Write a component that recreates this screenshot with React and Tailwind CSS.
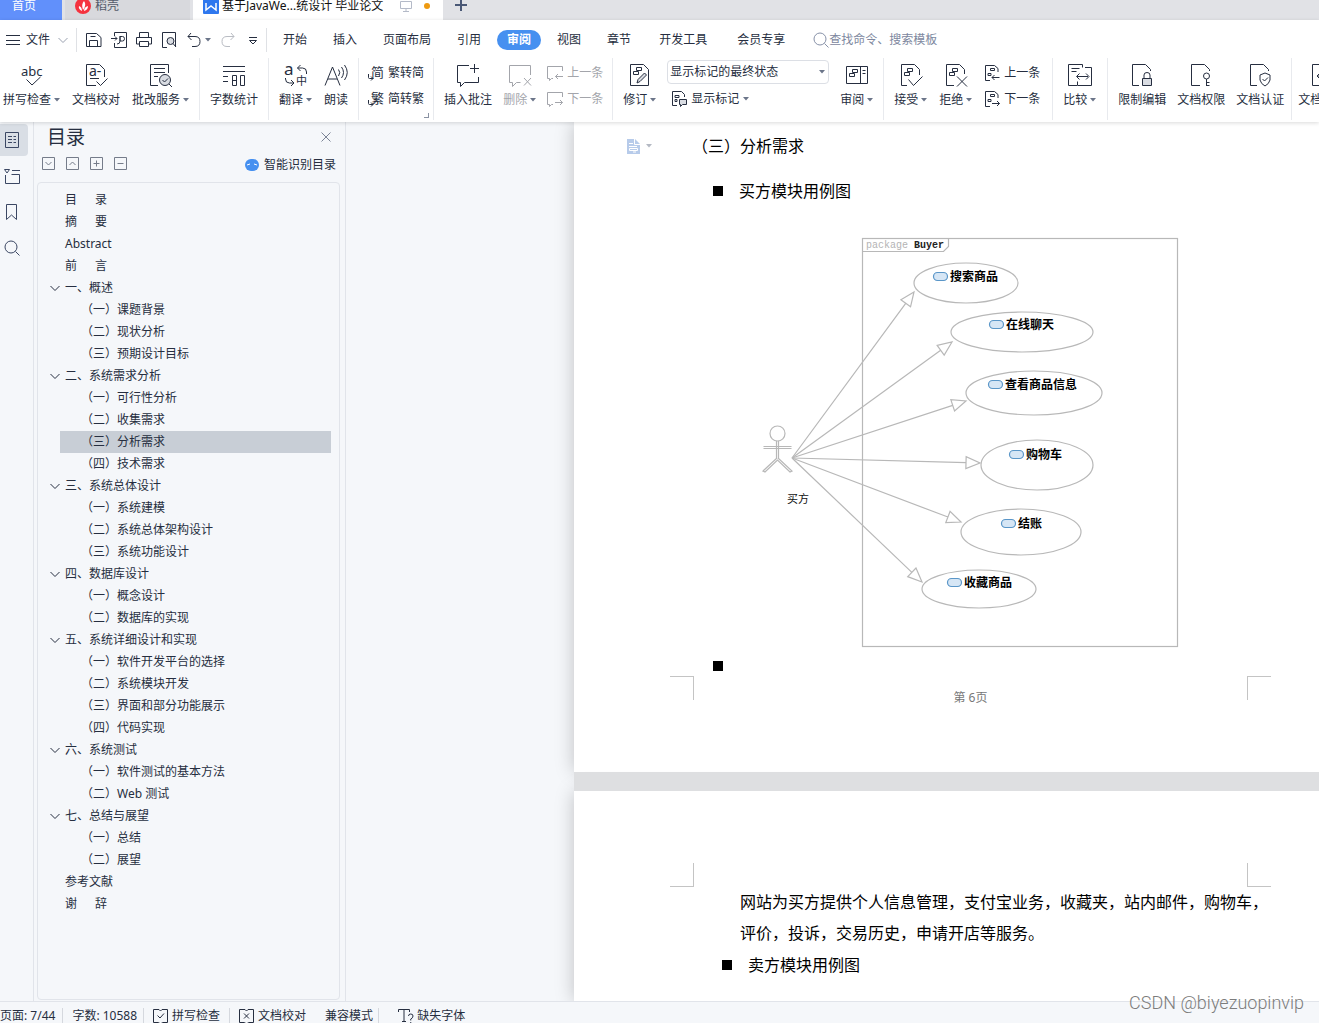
import { Fragment } from 'react'

const glyph = { stroke: 'none', fill: 'currentColor' }

// 24px ribbon icons
const BIG = {
  spell: (
    <>
      <text x="1" y="12" fontSize="13" {...glyph}>abc</text>
      <path d="M6.5 15.5l5.5 5.5 8.5-8" />
    </>
  ),
  proof: (
    <>
      <path d="M12 21.5H2.5V.5h13l5 5V13M6 14.500h9" />
      <text x="5" y="12" fontSize="14" {...glyph}>a-</text>
      <path d="M12.5 17.5l4 4 7-7" />
    </>
  ),
  correct: (
    <>
      <path d="M9 21.5H1.500V.5h18V9M5 4.500h11M5 8.500h11M5 12.500h4" />
      <circle cx="16" cy="16" r="5.500" fill="#d9dce2" />
      <path d="M13.500 16l2 2 3.500-3.500M20 20l3 3" />
    </>
  ),
  count: (
    <path d="M1 2.500h22M1 7.500h22M1 12.500h5M1 17.500h5M10.500 11.500h4v10h-4zM10.500 16.500h4M18.500 11.500h4v10h-4z" />
  ),
  translate: (
    <>
      <text x="0" y="11" fontSize="17" {...glyph}>a</text>
      <text x="12" y="21" fontSize="11" {...glyph}>中</text>
      <path d="M22.500 10V8q0-4-4-4h-5M16.500 1l-3 3 3 3M1.500 14v1q0 4 4 4h4M7 16l3 3-3 3" />
    </>
  ),
  read: (
    <path d="M1 21.500L8.500 3l7.500 18.500M4 15h9M14.500 5.500q2.500 3 0 6.500M17.500 3q4 5.500 0 11M20.500 1q5.500 7.500 0 15" />
  ),
  comment: <path d="M13 1.500H1.500v17h3v4l4-4h14V13M18.500 0v9M14 4.500h9" />,
  commentDel: <path d="M22.500 11V1.500H1.500v17h3v4l4-4h4M16 14l7 7.500M23 14l-7 7.500" />,
  revise: (
    <>
      <path d="M2.500 21.500V.5h13l5 5v16zM5.500 7.500h5v3h-5zM8.500 3.500h5v3h-5z" />
      <path d="M9 19l1-3.500 6.500-6.500 2 2-6.500 6.500z" fill="#d9dce2" />
    </>
  ),
  pane: (
    <path d="M1.500 2.500h21v17h-21zM15.500 2.500v17M17.500 6.500h3M17.500 9.500h3M4.500 9.500h5v3h-5zM7.500 5.500h5v3h-5z" />
  ),
  accept: (
    <path d="M8 21.500H2.500V.5h13l5 5V11M5.500 8.500h5v3h-5zM8.500 4.500h5v3h-5zM9.500 15.500l5 6 9-9" />
  ),
  reject: (
    <path d="M10 21.500H2.500V.5h13l5 5V10M5.500 8.500h5v3h-5zM8.500 4.500h5v3h-5zM13 12.500l10 10M23 12.500l-10 10" />
  ),
  compare: (
    <path d="M9 21.500H.5V.5h14v3M3.500 4.500h8M3.500 7.500h5M17 3.500h6.500v18h-14v-4M9 12.500h11M11.500 9.500l-3 3 3 3M18 9.500l3 3-3 3" />
  ),
  lock: (
    <>
      <path d="M9 21.500H2.500V.5h13l5 5V7M14 14v-3q0-2.500 3-2.500t3 2.500v3" />
      <path d="M12.500 14.500h9v7h-9z" fill="#d9dce2" />
    </>
  ),
  key: (
    <>
      <path d="M11 21.500H2.500V.5h13l5 5V7M17.500 15v7M17.500 18.500h3M17.500 21.500h3" />
      <circle cx="17.500" cy="12" r="3" />
    </>
  ),
  shield: (
    <path d="M9 21.500H2.500V.5h13l5 5V7M17 9l5 2v5q-1 4-5 6-4-2-5-6v-5zM14.500 15l2 2 3.500-3.500" />
  ),
  back: <path d="M24 21.500H2.500V.5h13l5 5M7 12h10M10 9l-3 3 3 3" />,
}

// 16px icons
const SMALL = {
  save: <path d="M.5 14.500V1.500h10l4.500 4v9zM3.500 14v-5.500h8V14M4.500 4.500h5" />,
  pdf: (
    <path d="M3.500 4V.5h12v15h-12V11M0 6.500h6M4 4.500l2 2-2 2M9 4.500h2.500q2 0 2 2.250t-2 2.250H9zM9 4v5q0 3-3 3" />
  ),
  print: <path d="M3.500 5V.5h9V5M3.500 12H.5V5.500h15V12h-3M3.500 9.500h9v5h-9z" />,
  preview: (
    <>
      <path d="M6 15.500H1.500V.5h13V15" />
      <circle cx="9.500" cy="9" r="3.500" fill="#d9dce2" />
      <path d="M12 11.500l3 3.500" />
    </>
  ),
  undo: <path d="M5 1L2 4.500 5.500 8M2 4.500h7q5 0 5 5t-5 5H6" />,
  redo: <path d="M11 1l3 3.500L10.500 8M14 4.500H7q-5 0-5 5t5 5h3" />,
  more: <path d="M4 5.500h8M4.500 8.500L8 12l3.500-3.500z" />,
  menu: <path d="M1 3.500h14M1 8.500h14M1 12.500h14" />,
  chevron: <path d="M3.500 6L8 10.500 12.500 6" />,
  search: (
    <>
      <circle cx="7" cy="7" r="6" />
      <path d="M11.500 11.500l4 4" />
    </>
  ),
  toSimp: (
    <>
      <text x="3" y="12" fontSize="13" {...glyph}>简</text>
      <path d="M.5 9v3.500q0 1 1 1H5M3 11.500l2 2-2 2" />
    </>
  ),
  toTrad: (
    <>
      <text x="3" y="12" fontSize="13" {...glyph}>繁</text>
      <path d="M.5 9v3.500q0 1 1 1H5M3 11.500l2 2-2 2" />
    </>
  ),
  notePrev: <path d="M15.500 6V1.500H.5v12h2v2l2-2H6M16 11.500H8.500M11 9l-2.500 2.500L11 14" />,
  noteNext: <path d="M15.500 6V1.500H.5v12h2v2l2-2H6M8 11.500h7.500M13 9l2.500 2.500L13 14" />,
  marks: (
    <>
      <path d="M6 14.500H1.500V.5h9l3 3V6M4 4.500h4v2H4zM4 8.500h2v2H4z" />
      <path d="M8.500 8.500h7v5h-4l-2 2v-2h-1z" fill="#d9dce2" />
    </>
  ),
  docPrev: (
    <path d="M6 15.500H1.500V.5h9l3.500 3V7M6.500 3.500h4v2h-4zM4 8.500h3v2H4zM15.500 12.500H8M10.500 10L8 12.500l2.500 2.500" />
  ),
  docNext: (
    <path d="M6 15.500H1.500V.5h9l3.500 3V7M6.500 3.500h4v2h-4zM4 8.500h3v2H4zM8 12.500h7.500M13 10l2.500 2.500L13 15" />
  ),
  outline: <path d="M1.500.5h13v15h-13zM4 4.500h4M9.500 4.500H12M4 7.500h4M9.500 7.500H12M4 10.500h4M9.500 10.500H12" />,
  chapters: <path d="M.5 1.500h5L3 5zM8 2.500h8M1.500 7v8.500h14v-9h-8" />,
  bookmark: <path d="M3.500.5h10v15l-5-4.500-5 4.500z" />,
  down: <path d="M1.500 1.500h12v12h-12zM4.500 6l3 3 3-3" />,
  up: <path d="M1.500 1.500h12v12h-12zM4.500 9l3-3 3 3" />,
  plus: <path d="M1.500 1.500h12v12h-12zM4.500 7.500h6M7.500 4.500v6" />,
  minus: <path d="M1.500 1.500h12v12h-12zM4.500 7.500h6" />,
  close: <path d="M3.500 3.500l9 9M12.500 3.500l-9 9" />,
  bookCheck: <path d="M6 1.500H.5v13h5l2 1.500 2-1.500h5v-13H9L7.500 3 6 1.500M4.500 7.500l2.500 2.500 4-4.500" />,
  bookCross: <path d="M6 1.500H.5v13h5l2 1.500 2-1.500h5v-13H9L7.500 3 6 1.500M5 5.500l5 5M10 5.500l-5 5" />,
  font: <path d="M.5 4V1.500h11V4M6 1.500v12M4 13.500h4M10.500 8q0-2 2.250-2t2.250 2-2.250 3v1.500M12.750 14v1" />,
}

function Icon({ name, className = '' }) {
  const big = name in BIG
  return (
    <svg
      viewBox={big ? '0 0 24 24' : '0 0 16 16'}
      className={`shrink-0 overflow-visible ${big ? 'size-6' : 'size-4'} ${className}`}
      fill="none"
      stroke="currentColor"
      aria-hidden="true"
    >
      {big ? BIG[name] : SMALL[name]}
    </svg>
  )
}

function Caret() {
  return (
    <svg viewBox="0 0 6 4" className="w-1.5 h-1 shrink-0 text-[#6b7589]" fill="currentColor" aria-hidden="true">
      <path d="M0 0h6L3 3.500z" />
    </svg>
  )
}

function Tool({ icon, label, caret, disabled }) {
  return (
    <button
      disabled={disabled}
      className={`flex flex-col items-center gap-1 shrink-0 whitespace-nowrap ${disabled ? 'text-[#a3a5ab]' : ''}`}
    >
      <Icon name={icon} />
      <span className="flex items-center gap-[3px] leading-4">
        {label}
        {caret && <Caret />}
      </span>
    </button>
  )
}

function MiniTool({ icon, label, caret, disabled }) {
  return (
    <button
      disabled={disabled}
      className={`flex items-center gap-1 leading-4 whitespace-nowrap ${disabled ? 'text-[#a3a5ab]' : ''}`}
    >
      <Icon name={icon} />
      {label}
      {caret && <Caret />}
    </button>
  )
}

function Group({ children, className = 'gap-3 px-2.5' }) {
  return (
    <div className={`flex shrink-0 pt-1.5 h-[62px] border-r border-[#e8eaee] ${className}`}>
      {children}
    </div>
  )
}

function Stack({ children }) {
  return <div className="flex flex-col gap-2.5 shrink-0 pt-px">{children}</div>
}

const MENU = ['开始', '插入', '页面布局', '引用', '审阅', '视图', '章节', '开发工具', '会员专享']

function menuClass(item) {
  if (item === '审阅') return 'h-5 px-2.5 mx-[3px] rounded-full bg-[#4690f0] text-white font-bold'
  if (item === '开发工具' || item === '会员专享') return 'h-5 px-[15px]'
  return 'h-5 px-[13px]'
}

const OUTLINE = [
  [0, '目', '录'],
  [0, '摘', '要'],
  [0, 'Abstract'],
  [0, '前', '言'],
  [1, '一、概述'],
  [2, '（一）课题背景'],
  [2, '（二）现状分析'],
  [2, '（三）预期设计目标'],
  [1, '二、系统需求分析'],
  [2, '（一）可行性分析'],
  [2, '（二）收集需求'],
  [2, '（三）分析需求'],
  [2, '（四）技术需求'],
  [1, '三、系统总体设计'],
  [2, '（一）系统建模'],
  [2, '（二）系统总体架构设计'],
  [2, '（三）系统功能设计'],
  [1, '四、数据库设计'],
  [2, '（一）概念设计'],
  [2, '（二）数据库的实现'],
  [1, '五、系统详细设计和实现'],
  [2, '（一）软件开发平台的选择'],
  [2, '（二）系统模块开发'],
  [2, '（三）界面和部分功能展示'],
  [2, '（四）代码实现'],
  [1, '六、系统测试'],
  [2, '（一）软件测试的基本方法'],
  [2, '（二）Web 测试'],
  [1, '七、总结与展望'],
  [2, '（一）总结'],
  [2, '（二）展望'],
  [0, '参考文献'],
  [0, '谢', '辞'],
]

// ellipse centre and radii, label origin, arrow tip
const CASES = [
  { name: '搜索商品', cx: 226, cy: 53, rx: 52, ry: 20, x: 210, y: 51, tip: [174, 62] },
  { name: '在线聊天', cx: 282, cy: 102, rx: 71, ry: 20, x: 266, y: 99, tip: [212, 112] },
  { name: '查看商品信息', cx: 294, cy: 163, rx: 68, ry: 22, x: 265, y: 159, tip: [226, 171] },
  { name: '购物车', cx: 297, cy: 235, rx: 56, ry: 25, x: 286, y: 229, tip: [240, 233] },
  { name: '结账', cx: 281, cy: 302, rx: 60, ry: 23, x: 278, y: 298, tip: [221, 292] },
  { name: '收藏商品', cx: 239, cy: 359, rx: 57, ry: 19, x: 224, y: 357, tip: [182, 352] },
]

function Arrow({ tip: [tx, ty] }) {
  const [sx, sy] = [52, 228]
  const angle = (Math.atan2(ty - sy, tx - sx) * 180) / Math.PI
  const length = Math.hypot(tx - sx, ty - sy)
  return (
    <g transform={`translate(${sx} ${sy}) rotate(${angle})`}>
      <path d={`M0 0H${length - 14}M${length - 14} -6V6L${length} 0z`} />
    </g>
  )
}

function UseCaseDiagram() {
  return (
    <svg
      viewBox="0 0 450 420"
      className="w-[450px] h-[420px] shrink-0"
      fill="none"
      stroke="#b8b8b8"
      strokeWidth="1.2"
      role="img"
      aria-label="买方模块用例图"
    >
      <rect x="122.500" y="8.500" width="315" height="408" />
      <path d="M122.500 21.500h81l5-5v-8" />
      <text x="126" y="18" fontSize="10" fill="#b4b4b4" stroke="none" fontFamily="Liberation Mono, monospace">
        package
      </text>
      <text x="174" y="18" fontSize="10" fontWeight="bold" fill="#222" stroke="none" fontFamily="Liberation Mono, monospace">
        Buyer
      </text>
      <circle cx="37.500" cy="203.500" r="7.500" />
      <path d="M36.500 211v7M38.500 211v7M23.500 216.500h28M23.500 218.500h28M36.500 218v11M38.500 218v11M37 228l-14 13 2 1 12.500-12 12.500 12 2-1-14-13" />
      <text x="47" y="273" fontSize="11" fill="#111" stroke="none">买方</text>
      {CASES.map(c => (
        <Fragment key={c.name}>
          <Arrow tip={c.tip} />
          <ellipse cx={c.cx} cy={c.cy} rx={c.rx} ry={c.ry} />
          <rect x={c.x - 16.5} y={c.y - 8.500} width="14" height="8" rx="4" fill="#d6e6f5" stroke="#5a96c8" />
          <text x={c.x} y={c.y} fontSize="12" fontWeight="bold" fill="#000" stroke="none">{c.name}</text>
        </Fragment>
      ))}
    </svg>
  )
}

function Bullet() {
  return <span className="size-2.5 bg-black shrink-0" />
}

export default function App() {
  return (
    <div className="relative h-screen flex flex-col overflow-hidden bg-[#f5f7fa] text-xs text-[#262e40] font-['Noto_Sans','Noto_Sans_CJK_SC',sans-serif]">
      <nav className="flex h-5 shrink-0 bg-[#e1e2e6] leading-3">
        <button className="flex items-start w-[62px] pl-3 bg-[#6190fb] text-white">首页</button>
        <button className="flex items-start gap-1 w-[125px] ml-[3px] pl-2.5 bg-[#d8d9dd] text-[#555c6b]">
          <svg viewBox="0 2 16 14" className="w-4 h-3.5" aria-hidden="true">
            <circle cx="8" cy="8" r="8" fill="#f5333f" />
            <path d="M7 13q-4-2-3-5 3 1 3 5zM8 12q-2-6 1-9 3 4-1 9zM9 13q0-4 4-5 0 4-4 5z" fill="#fff" />
          </svg>
          稻壳
        </button>
        <button className="flex items-start w-[250px] ml-[3px] pl-2.5 bg-white text-[#111]">
          <svg viewBox="0 2 16 14" className="w-4 h-3.5 mr-[3px] shrink-0" aria-hidden="true">
            <rect width="16" height="16" rx="1" fill="#2e77ee" />
            <path d="M3 5v7l5-4 5 4V5" fill="none" stroke="#fff" strokeWidth="1.500" />
          </svg>
          <span className="whitespace-nowrap">基于JavaWe...统设计 毕业论文</span>
          <svg viewBox="0 0 12 12" className="size-3 ml-[17px] shrink-0" fill="none" stroke="#b4bac8" aria-hidden="true">
            <path d="M.5 1.500h11v7H.5zM6 8.500v3M3 11.500h6" />
          </svg>
          <span className="size-1.5 mt-[3px] ml-3 rounded-full bg-[#ee9a10]" />
        </button>
        <button aria-label="新建" className="flex items-start pl-3 text-[#4a5876]">
          <svg viewBox="0 1 12 12" className="size-3" stroke="currentColor" strokeWidth="2" aria-hidden="true">
            <path d="M6 0v12M0 6h12" />
          </svg>
        </button>
      </nav>

      <header className="relative z-10 shrink-0 h-[102px] bg-white shadow-[0_1px_4px_rgba(0,0,0,0.15)]">
        <div className="flex items-center h-[38px] pt-0.5 whitespace-nowrap">
          <button className="flex items-center gap-[5px] pl-[5px]">
            <Icon name="menu" />
            文件
            <Icon name="chevron" className="text-[#9aa1b0]" />
          </button>
          <div className="flex items-center gap-[9px] h-6 ml-[5px] pl-[9px] pr-[5px] border-x border-[#dfe1e5]">
            <button aria-label="保存"><Icon name="save" /></button>
            <button aria-label="输出为PDF"><Icon name="pdf" /></button>
            <button aria-label="打印"><Icon name="print" /></button>
            <button aria-label="打印预览"><Icon name="preview" /></button>
            <button aria-label="撤销" className="flex items-center gap-[3px]"><Icon name="undo" /><Caret /></button>
            <button aria-label="恢复" className="text-[#b9bcc3]"><Icon name="redo" /></button>
            <button aria-label="更多"><Icon name="more" /></button>
          </div>
          <div className="flex items-center ml-[3px]">
            {MENU.map(item => (
              <button key={item} className={menuClass(item)}>{item}</button>
            ))}
          </div>
          <label className="flex items-center flex-1 ml-[13px] text-[#8791a8]">
            <Icon name="search" />
            <input
              aria-label="查找命令"
              placeholder="查找命令、搜索模板"
              className="w-40 outline-none placeholder:text-[#7d879e]"
            />
          </label>
        </div>

        <div className="flex overflow-hidden">
          <div className="-ml-[7px] flex">
            <Group>
              <Tool icon="spell" label="拼写检查" caret />
              <Tool icon="proof" label="文档校对" />
              <Tool icon="correct" label="批改服务" caret />
            </Group>
            <Group>
              <Tool icon="count" label="字数统计" />
            </Group>
            <Group>
              <Tool icon="translate" label="翻译" caret />
              <Tool icon="read" label="朗读" />
            </Group>
            <Group className="relative px-[9px]">
              <Stack>
                <MiniTool icon="toSimp" label="繁转简" />
                <MiniTool icon="toTrad" label="简转繁" />
              </Stack>
              <span className="absolute right-1 bottom-0.5 size-[5px] border-r border-b border-[#8a92a3]" />
            </Group>
            <Group className="gap-[11px] pl-2.5 pr-[9px]">
              <Tool icon="comment" label="插入批注" />
              <Tool icon="commentDel" label="删除" caret disabled />
              <Stack>
                <MiniTool icon="notePrev" label="上一条" disabled />
                <MiniTool icon="noteNext" label="下一条" disabled />
              </Stack>
            </Group>
            <Group className="gap-[11px] px-2.5">
              <Tool icon="revise" label="修订" caret />
              <div className="flex flex-col gap-[7px] shrink-0 -mt-1">
                <div className="relative flex items-center">
                  <select
                    aria-label="标记状态"
                    className="appearance-none w-[162px] h-6 pl-0.5 border border-[#dcdfe5] rounded-sm bg-white outline-none"
                  >
                    <option>显示标记的最终状态</option>
                  </select>
                  <span className="absolute right-1 flex"><Caret /></span>
                </div>
                <div className="pl-1">
                  <MiniTool icon="marks" label="显示标记" caret />
                </div>
              </div>
              <Tool icon="pane" label="审阅" caret />
            </Group>
            <Group className="gap-3 pl-2.5 pr-3">
              <Tool icon="accept" label="接受" caret />
              <Tool icon="reject" label="拒绝" caret />
              <Stack>
                <MiniTool icon="docPrev" label="上一条" />
                <MiniTool icon="docNext" label="下一条" />
              </Stack>
            </Group>
            <Group className="pl-2.5 pr-[11px]">
              <Tool icon="compare" label="比较" caret />
            </Group>
            <Group className="gap-[11px] pl-2.5 pr-[7px]">
              <Tool icon="lock" label="限制编辑" />
              <Tool icon="key" label="文档权限" />
              <Tool icon="shield" label="文档认证" />
            </Group>
            <Group className="pl-1.5">
              <Tool icon="back" label="文档定稿" />
            </Group>
          </div>
        </div>
      </header>

      <div className="flex flex-1 min-h-0">
        <aside className="flex flex-col items-start w-[34px] shrink-0 pt-0.5 gap-1 border-r border-[#e1e4ea] text-[#3b4763]">
          <button aria-label="目录" className="flex items-center pl-1 w-7 h-8 rounded-r-sm bg-[#d9dee5]"><Icon name="outline" /></button>
          <button aria-label="章节" className="flex items-center pl-1 w-7 h-8"><Icon name="chapters" /></button>
          <button aria-label="书签" className="flex items-center pl-[3px] w-7 h-8"><Icon name="bookmark" /></button>
          <button aria-label="查找" className="flex items-center pl-1 w-7 h-8"><Icon name="search" /></button>
        </aside>

        <section className="flex flex-col w-[312px] shrink-0 border-r border-[#e1e4ea] pl-[3px] pr-[5px]">
          <div className="flex items-center justify-between h-[30px] pl-2.5 pr-1.5">
            <h2 className="text-[19px] leading-6">目录</h2>
            <button aria-label="关闭" className="text-[#7b8496]"><Icon name="close" /></button>
          </div>
          <div className="flex items-center h-6 pl-1 pr-1 gap-2 text-[#757c8a]">
            <button aria-label="展开"><Icon name="down" /></button>
            <button aria-label="收起"><Icon name="up" /></button>
            <button aria-label="放大"><Icon name="plus" /></button>
            <button aria-label="缩小"><Icon name="minus" /></button>
            <button className="flex items-center gap-[5px] ml-auto pt-0.5 text-[#262e40]">
              <svg viewBox="0 0 14 12" className="w-3.5 h-3" aria-hidden="true">
                <rect width="14" height="12" rx="6" fill="#4690f0" />
                <path d="M2 6l3-1M9 5l3 1" stroke="#fff" />
              </svg>
              智能识别目录
            </button>
          </div>
          <ul className="flex-1 min-h-0 mt-1.5 mb-px pt-1.5 border border-[#e1e4ea] rounded-sm">
            {OUTLINE.map(([level, text, tail]) => (
              <li
                key={text}
                className={`flex items-center h-[22px] ml-[22px] mr-2 ${text === '（三）分析需求' ? 'bg-[#c8ced6]' : ''}`}
              >
                {level === 1 && <Icon name="chevron" className="-ml-[13px] mr-0.5" />}
                <a href="#" className={level === 2 ? 'pl-[21px]' : level === 0 ? 'flex gap-[18px] pl-[5px]' : ''}>
                  {text}
                  {tail && <span>{tail}</span>}
                </a>
              </li>
            ))}
          </ul>
        </section>

        <main className="flex flex-col flex-1 min-w-0 overflow-hidden pl-[228px] text-base text-black">
          <article className="shrink-0 bg-white shadow-[0_0_18px_rgba(0,0,0,0.22)] pt-3 pb-[52px]">
            <div className="flex items-center h-6 pl-[53px]">
              <svg viewBox="0 0 13 15" className="w-[13px] h-[15px]" aria-hidden="true">
                <path d="M0 0h8l5 5v10H0z" fill="#b7cbea" />
                <path d="M7.500 0v5.500H13M2 4.500h4M2 7.500h8M2.500 9.500h8v2h-8zM6 13h3" fill="none" stroke="#fff" />
              </svg>
              <span className="flex ml-1.5 opacity-50"><Caret /></span>
              <h3 className="ml-10">（三）分析需求</h3>
            </div>
            <div className="flex items-center gap-4 h-6 mt-[21px] pl-[139px]">
              <Bullet />
              <p>买方模块用例图</p>
            </div>
            <div className="mt-[27px] pl-[166px]">
              <UseCaseDiagram />
            </div>
            <div className="flex items-center h-5 mt-1.5 pl-[139px]">
              <Bullet />
            </div>
            <footer className="flex justify-between w-[601px] h-11 ml-24">
              <span className="size-6 border-t border-r border-[#c4c4c4]" />
              <span className="self-center text-xs text-[#777]">第 6页</span>
              <span className="size-6 border-t border-l border-[#c4c4c4]" />
            </footer>
          </article>

          <div className="relative h-[19px] shrink-0 bg-[#dedfe1]" />

          <article className="flex-1 bg-white shadow-[0_0_18px_rgba(0,0,0,0.22)] pt-[72px]">
            <div className="flex justify-between w-[601px] ml-24">
              <span className="size-6 border-b border-r border-[#c4c4c4]" />
              <span className="size-6 border-b border-l border-[#c4c4c4]" />
            </div>
            <p className="pl-[166px] leading-[31px] whitespace-nowrap">
              网站为买方提供个人信息管理，支付宝业务，收藏夹，站内邮件，购物车，
              <br />
              评价，投诉，交易历史，申请开店等服务。
            </p>
            <div className="flex items-center gap-4 h-[31px] pl-[148px]">
              <Bullet />
              <p>卖方模块用例图</p>
            </div>
          </article>
        </main>
      </div>

      <footer className="relative flex items-start h-[22px] shrink-0 pt-1.5 border-t border-[#e1e4ea] bg-[#f5f7fa] leading-4 whitespace-nowrap">
        <span className="pr-[7px] border-r border-[#d5d8de]">页面: 7/44</span>
        <span className="pl-[9px] pr-1.5 border-r border-[#d5d8de]">字数: 10588</span>
        <button className="flex items-center gap-[3px] px-[9px] border-r border-[#d5d8de]">
          <Icon name="bookCheck" />
          拼写检查
        </button>
        <button className="flex items-center gap-[3px] pl-[9px]">
          <Icon name="bookCross" />
          文档校对
        </button>
        <span className="ml-[19px] pr-[5px] border-r border-[#d5d8de]">兼容模式</span>
        <button className="flex items-center gap-[3px] pl-[19px]">
          <Icon name="font" />
          缺失字体
        </button>
      </footer>

      <span className="absolute right-[15px] bottom-2 font-[Roboto,sans-serif] font-light text-lg leading-6 text-[#7c7c7c]">
        CSDN @biyezuopinvip
      </span>
    </div>
  )
}
